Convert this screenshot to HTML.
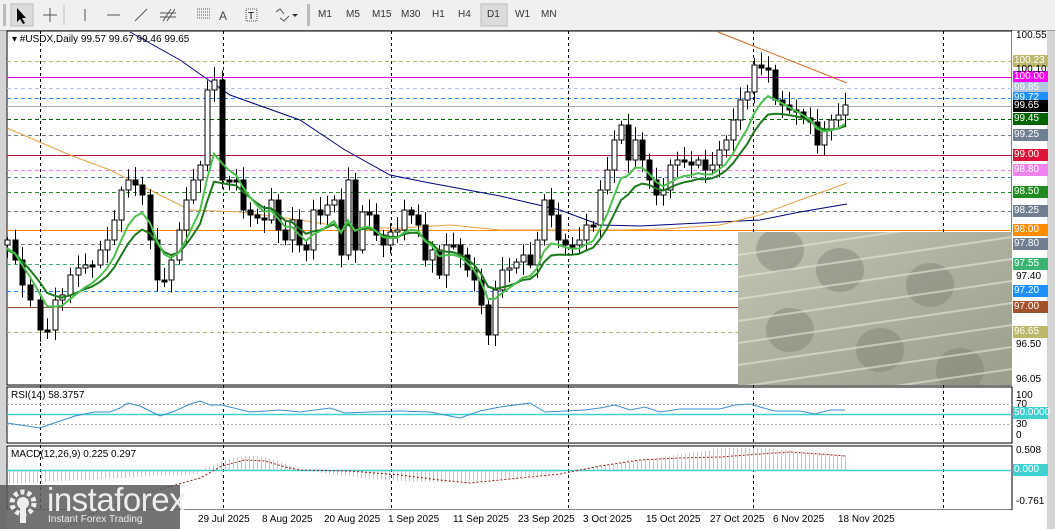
<!DOCTYPE html><html><head><style>
body{margin:0;width:1055px;height:529px;overflow:hidden;background:#f0f0f0;font-family:"Liberation Sans",sans-serif;font-size:10px;position:relative}
.tb{position:absolute;top:0;left:0;width:1055px;height:30px;background:#f0f0f0;border-bottom:1px solid #a0a0a0}
.tb span{position:absolute;top:9px;font-size:10px;color:#333}
.lab{position:absolute;left:1013px;width:34px;height:12px;font-size:10px;line-height:12px;color:#fff;padding-left:1px}
.tx{position:absolute;left:1016px;font-size:10px;color:#000}
</style></head><body>
<div class="tb">
<svg width="800" height="30" style="position:absolute;left:0;top:0">
<rect x="3" y="4" width="3" height="22" fill="#bbb"/>
<rect x="11" y="4" width="22" height="22" fill="#dcdcdc" stroke="#bbb"/>
<path d="M17 8 L17 22 L20 19 L23 24 L25 23 L22 18 L26 18 Z" fill="#000"/>
<path d="M50 8 V22 M43 15 H57" stroke="#555"/>
<line x1="64" y1="5" x2="64" y2="25" stroke="#bbb"/>
<line x1="85" y1="9" x2="85" y2="21" stroke="#555"/>
<line x1="107" y1="15" x2="120" y2="15" stroke="#555"/>
<line x1="135" y1="21" x2="147" y2="9" stroke="#555"/>
<path d="M163 21 L171 9 M167 21 L175 9 M160 13 H176 M160 17 H176" stroke="#555"/>
<path d="M197 9 H210 M197 12 H210 M197 15 H210 M197 18 H210" stroke="#555" stroke-dasharray="1 1"/>
<text x="219" y="20" font-size="12" fill="#444">A</text>
<rect x="246" y="9" width="11" height="12" fill="none" stroke="#555" stroke-dasharray="1 1"/><text x="248" y="19" font-size="10">T</text>
<path d="M276 12 L280 9 L284 14 M280 18 L284 21 L289 16" stroke="#555" fill="none"/><path d="M292 14 L298 14 L295 17Z" fill="#333"/>
<rect x="307" y="4" width="3" height="22" fill="#bbb"/>
<rect x="481" y="4" width="26" height="22" fill="#dcdcdc" stroke="#bbb"/>
</svg>
<span style="left:318px">M1</span><span style="left:346px">M5</span><span style="left:372px">M15</span><span style="left:401px">M30</span><span style="left:432px">H1</span><span style="left:458px">H4</span><span style="left:487px">D1</span><span style="left:515px">W1</span><span style="left:541px">MN</span>
</div>
<div style="position:absolute;left:0;top:31px;width:6px;height:498px;background:#d4d4d4"></div>
<div style="position:absolute;left:1047px;top:31px;width:8px;height:498px;background:#d4d4d4"></div>
<svg id="c" width="1055" height="529" style="position:absolute;left:0;top:0"></svg>
<div id="labs"></div>
<div style="position:absolute;left:0;top:485px;width:180px;height:44px;background:rgba(90,90,90,0.85)"></div>
<svg width="40" height="40" style="position:absolute;left:6px;top:487px"><circle cx="17" cy="16" r="11" fill="none" stroke="#eee" stroke-width="5" stroke-dasharray="4 3"/><circle cx="17" cy="16" r="6" fill="#eee"/><rect x="14" y="18" width="6" height="18" fill="#eee"/></svg>
<div style="position:absolute;left:47px;top:481px;font-size:33px;color:#eee;letter-spacing:-0.5px">instaforex</div>
<div style="position:absolute;left:48px;top:514px;font-size:10px;color:#eee">Instant Forex Trading</div>
<script>
var s='';
function L(x1,y1,x2,y2,c,d,w){s+='<line x1="'+x1+'" y1="'+y1+'" x2="'+x2+'" y2="'+y2+'" stroke="'+c+'"'+(d?' stroke-dasharray="'+d+'"':'')+(w?' stroke-width="'+w+'"':'')+'/>';}
function R(x,y,w,h,f,st){s+='<rect x="'+x+'" y="'+y+'" width="'+w+'" height="'+h+'" fill="'+f+'"'+(st?' stroke="'+st+'"':'')+'/>';}
function T(x,y,t,c,fs){s+='<text x="'+x+'" y="'+y+'" font-size="'+(fs||10)+'" fill="'+(c||'#000')+'" font-family="Liberation Sans">'+t+'</text>';}
R(7,31,1005,354,'#fff','#000');R(1012,31,35,498,'#fff');
R(7,387,1005,56,'#fff','#000');R(7,446,1005,64,'#fff','#000');R(7,510,1040,19,'#fff');
var hl=[[61,'#bdb76b',1],[77,'#e000e0',0],[88,'#b0c4de',1],[98,'#1e90ff',1],[106,'#aaa',0],[119,'#006400',1],[135,'#708090',1],[155,'#c0143c',0],[170,'#ee82ee',1],[177,'#4682b4',1],[192,'#228b22',1],[211,'#708090',1],[230,'#ff8c00',0],[244,'#708090',1],[264,'#3cb371',1],[291,'#1e90ff',1],[307,'#a0522d',0],[332,'#bdb76b',1]];
hl.forEach(function(h){L(7,h[0]+.5,1012,h[0]+.5,h[1],h[2]?'4 3':'');});
[40,223,391,568,753,943].forEach(function(x){L(x+.5,31,x+.5,510,'#000','3 3');});
s+='<polyline fill="none" stroke="#000080" points="130,32 180,60 230,95 300,120 345,150 390,175 430,183 500,196 560,210 600,225 640,226 700,223 760,220 800,212 847,204"/>';
s+='<polyline fill="none" stroke="#e8a040" points="7,128 70,155 110,170 150,190 190,210 240,212 300,220 350,228 400,228 450,225 500,230 560,230 620,230 665,229 720,225 760,215 800,200 847,183"/>';
L(718,32,847,83,'#d2691e');
var P=[[7,240],[15,260],[22,285],[30,300],[40,330],[47,330],[55,300],[62,295],[70,275],[78,268],[85,265],[92,265],[100,250],[107,240],[114,220],[121,190],[128,180],[135,185],[142,195],[150,240],[157,280],[164,280],[171,260],[179,230],[186,200],[193,180],[200,165],[207,90],[214,80],[222,180],[229,180],[236,180],[243,210],[250,215],[257,218],[264,220],[271,200],[278,230],[285,240],[292,220],[299,245],[306,250],[313,210],[320,215],[327,205],[334,200],[341,255],[348,180],[355,250],[362,212],[369,215],[376,235],[383,245],[390,232],[397,230],[404,210],[411,215],[418,225],[425,260],[432,250],[439,275],[446,245],[453,245],[460,255],[467,270],[474,280],[481,305],[488,335],[495,290],[502,270],[509,268],[516,262],[523,255],[530,265],[537,240],[544,200],[551,215],[558,240],[565,245],[572,245],[579,240],[586,225],[593,225],[600,190],[607,170],[614,140],[621,125],[628,160],[635,140],[642,160],[649,180],[656,195],[663,190],[670,165],[677,160],[684,162],[691,165],[698,160],[705,170],[712,165],[719,150],[726,140],[733,120],[740,100],[747,92],[754,65],[761,68],[768,70],[775,100],[782,105],[789,110],[796,112],[803,118],[810,122],[817,145],[824,130],[831,120],[838,115],[845,105]];
var g=[],dg=[],e1=P[0][1],e2=P[0][1];
for(var i=0;i<P.length;i++){var x=P[i][0],c=P[i][1],o=i?P[i-1][1]:c+5;var k=Math.abs(Math.sin(i*2.3))*10+3;
var hi=Math.min(o,c)-k,lo=Math.max(o,c)+Math.abs(Math.cos(i*1.7))*10+3;
L(x+.5,hi,x+.5,lo,'#000');
var bull=c<o;R(x-2,Math.min(o,c),5,Math.max(2,Math.abs(c-o)),bull?'#fff':'#000','#000');
e1=e1+(c-e1)*0.28;e2=e2+(c-e2)*0.18;g.push(x+','+(e1+8).toFixed(1));dg.push(x+','+(e2+10).toFixed(1));}
s+='<polyline fill="none" stroke="#1a7a1a" stroke-width="2" points="'+dg.join(' ')+'"/>';
s+='<polyline fill="none" stroke="#4cc04c" stroke-width="2" points="'+g.join(' ')+'"/>';
s+='<defs><linearGradient id="m" x1="0" y1="0" x2="1" y2="1"><stop offset="0" stop-color="#c4c4b4"/><stop offset=".5" stop-color="#aeb09e"/><stop offset="1" stop-color="#9a9e8c"/></linearGradient><clipPath id="cp"><rect x="738" y="232" width="274" height="153"/></clipPath></defs>';
R(738,232,274,153,'url(#m)');
s+='<g clip-path="url(#cp)">';
[[780,250],[840,270],[930,285],[790,330],[880,350],[960,370]].forEach(function(p){s+='<ellipse cx="'+p[0]+'" cy="'+p[1]+'" rx="24" ry="22" fill="#7a8070" opacity=".45"/>';});
for(var j=0;j<8;j++)s+='<line x1="738" y1="'+(255+j*22)+'" x2="1012" y2="'+(215+j*22)+'" stroke="#e8e8dc" stroke-width="2" opacity=".6"/>';
s+='</g>';
T(12,42,'▾ #USDX,Daily  99.57 99.67 99.46 99.65','#000',10);
L(7,404.5,1012,404.5,'#aaa','2 2');L(7,424.5,1012,424.5,'#aaa','2 2');L(7,414.5,1012,414.5,'#40d0d0',0,1.5);
var r=[[7,423],[20,425],[40,428],[60,421],[75,416],[95,412],[110,412],[120,408],[128,403],[140,406],[150,411],[160,416],[175,411],[190,404],[200,401],[210,405],[222,405],[250,412],[280,410],[300,412],[330,408],[345,413],[370,412],[400,411],[430,412],[460,418],[480,411],[500,407],[530,403],[545,412],[565,411],[585,410],[600,408],[615,405],[630,410],[645,407],[660,412],[680,409],[700,409],[720,409],[735,405],[750,404],[760,407],[775,411],[800,411],[815,414],[830,410],[845,410]];
s+='<polyline fill="none" stroke="#3a8fd0" points="'+r.map(function(p){return p.join(',')}).join(' ')+'"/>';
T(11,398,'RSI(14) 58.3757');
for(var x=9;x<=847;x+=4){var v;
if(x<200)v=-14+(x/200)*10;else if(x<300)v=14*Math.sin((x-200)/100*Math.PI);else if(x<570)v=-12*Math.sin((x-300)/270*Math.PI);else if(x<760)v=Math.min(22,(x-570)/7);else v=22-(x-760)/12;
L(x+.5,470,x+.5,470-v,'#c8c8c8');}
L(7,470.5,1012,470.5,'#40d0d0',0,1.5);
s+='<polyline fill="none" stroke="#a01010" stroke-dasharray="2 2" points="60,530 100,510 150,492 200,478 222,466 245,460 265,461 285,467 300,470 350,471 400,475 440,480 470,483 490,481 520,478 560,474 600,466 640,460 680,458 720,457 760,454 790,452 820,454 845,456"/>';
T(11,457,'MACD(12,26,9) 0.225 0.297');
[['29 Jul 2025',198],['8 Aug 2025',262],['20 Aug 2025',324],['1 Sep 2025',388],['11 Sep 2025',453],['23 Sep 2025',518],['3 Oct 2025',583],['15 Oct 2025',646],['27 Oct 2025',710],['6 Nov 2025',773],['18 Nov 2025',838]].forEach(function(d){T(d[1],522,d[0]);});
document.getElementById('c').innerHTML=s;
var lb=[[61,'#bdb76b','100.23'],[77,'#ff00ff','100.00'],[88,'#b0c4de','99.85'],[98,'#1e90ff','99.72'],[106,'#000','99.65'],[119,'#006400','99.45'],[135,'#708090','99.25'],[155,'#dc143c','99.00'],[170,'#ee82ee','98.80'],[192,'#228b22','98.50'],[211,'#708090','98.25'],[230,'#ff8c00','98.00'],[244,'#708090','97.80'],[264,'#3cb371','97.55'],[291,'#1e90ff','97.20'],[307,'#a0522d','97.00'],[332,'#bdb76b','96.65'],[413,'#40d0d0','50.0000'],[470,'#40d0d0','0.000']];
var h='';lb.forEach(function(l){h+='<div class="lab" style="top:'+(l[0]-6)+'px;background:'+l[1]+'">'+l[2]+'</div>';});
[[30,'100.55'],[64,'100.10'],[271,'97.40'],[339,'96.50'],[374,'96.05'],[390,'100'],[399,'70'],[419,'30'],[430,'0'],[445,'0.508'],[496,'-0.761']].forEach(function(t){h+='<div class="tx" style="top:'+t[0]+'px">'+t[1]+'</div>';});
document.getElementById('labs').innerHTML=h;
</script>
</body></html>
